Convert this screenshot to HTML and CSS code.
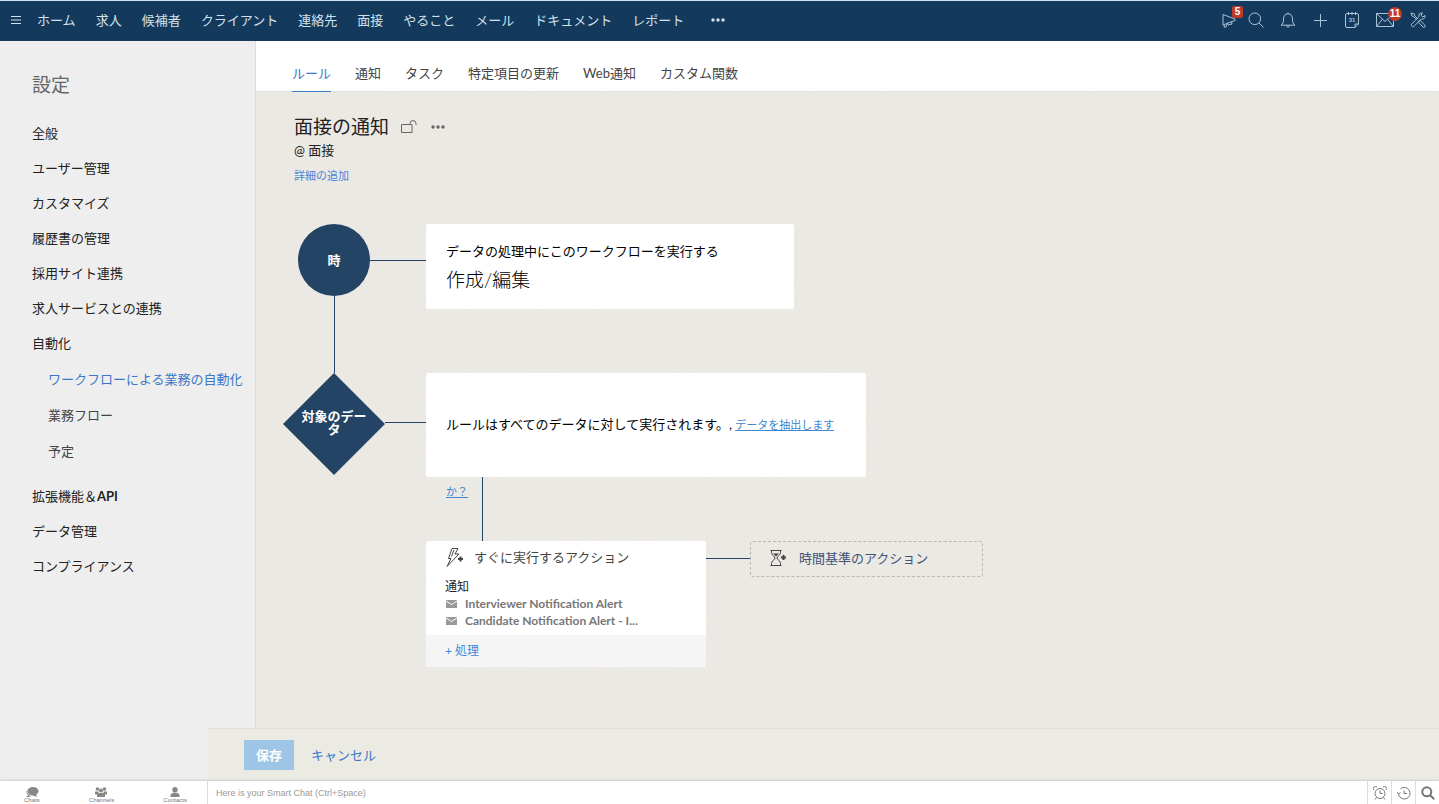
FILE: index.html
```
<!DOCTYPE html>
<html lang="ja">
<head>
  <meta charset="utf-8">
  <title>面接の通知</title>
  <meta name="viewport" content="width=device-width, initial-scale=1">
  <link rel="stylesheet" href="styles.css">
</head>
<body>
  <header class="topbar">
    <button class="icon-btn" aria-label="メニュー">
      <svg width="12" height="12" viewBox="0 0 12 12"><path d="M1 2.500h10M1 6h10M1 9.500h10"/></svg>
    </button>
    <nav class="topnav">
      <a href="#">ホーム</a>
      <a href="#">求人</a>
      <a href="#">候補者</a>
      <a href="#">クライアント</a>
      <a href="#">連絡先</a>
      <a href="#">面接</a>
      <a href="#">やること</a>
      <a href="#">メール</a>
      <a href="#">ドキュメント</a>
      <a href="#">レポート</a>
    </nav>
    <button class="icon-btn more" aria-label="その他">
      <svg class="dots" width="14" height="4" viewBox="0 0 14 4"><circle cx="2" cy="2" r="1.7"/><circle cx="7" cy="2" r="1.7"/><circle cx="12" cy="2" r="1.7"/></svg>
    </button>
    <div class="tools">
      <button class="icon-btn" aria-label="お知らせ">
        <svg width="16" height="16" viewBox="0 0 16 16"><path d="M2 2.500v10.500l3.500-1.500L14 8.500V7zM3.500 12.500l-.5 2.500h2l1-3M6.500 11l.5 2 4-1-.5-2"/></svg>
        <span class="badge square">5</span>
      </button>
      <button class="icon-btn" aria-label="検索">
        <svg width="16" height="16" viewBox="0 0 16 16"><circle cx="6.800" cy="6.800" r="5.800"/><path d="M11 11l4.500 4.500"/></svg>
      </button>
      <button class="icon-btn" aria-label="通知">
        <svg width="16" height="16" viewBox="0 0 16 16"><path d="M8 .5v1.200M1 13.200c2-1.200 2.500-3 2.500-6C3.500 4 5 1.800 8 1.800S12.500 4 12.500 7.200c0 3 .5 4.800 2.500 6zM6.500 13.200c0 2.500 3 2.500 3 0"/></svg>
      </button>
      <button class="icon-btn" aria-label="追加">
        <svg width="16" height="16" viewBox="0 0 16 16"><path d="M8.500 2v13M2 8.500h13"/></svg>
      </button>
      <button class="icon-btn" aria-label="カレンダー">
        <svg width="16" height="16" viewBox="0 0 16 16"><path d="M11 15.500H3a1.500 1.500 0 0 1-1.500-1.500V3A1.500 1.500 0 0 1 3 1.500h10A1.500 1.500 0 0 1 14.500 3v9zM11 15.500V12h3.500M4.500 0v3M8 0v3M11.500 0v3"/><text x="8" y="9.500">31</text></svg>
      </button>
      <button class="icon-btn" aria-label="メール">
        <svg width="18" height="14" viewBox="0 0 18 14"><path d="M.5.5h17v13H.5zM.5.5L9 8.500 17.500.5M.5 13.500l6-7.300M17.500 13.500l-6-7.300"/></svg>
        <span class="badge round">11</span>
      </button>
      <button class="icon-btn" aria-label="設定">
        <svg width="16" height="16" viewBox="0 0 16 16"><path d="M1 1l3.500 1 .3 1.800 3.400 3.400M1 1l1 3 1.800.8 3.400 3.400M9 9l1.200-.5 4.800 4.800c1 1.200-.7 2.900-1.900 1.900L8.500 10.400zM15 3.500L12.800 5 11 3.200 12.500 1C10 .5 8.300 2.500 9 4.700L1.700 12c-1.500 1.500.8 3.800 2.300 2.300L11.300 7c2.200.7 4.200-1 3.700-3.500z"/></svg>
      </button>
    </div>
  </header>

  <div class="layout">
    <aside class="sidebar">
      <h2>設定</h2>
      <ul class="menu">
        <li><a href="#">全般</a></li>
        <li><a href="#">ユーザー管理</a></li>
        <li><a href="#">カスタマイズ</a></li>
        <li><a href="#">履歴書の管理</a></li>
        <li><a href="#">採用サイト連携</a></li>
        <li><a href="#">求人サービスとの連携</a></li>
        <li><a href="#">自動化</a>
          <ul class="submenu">
            <li><a class="active" href="#">ワークフローによる業務の自動化</a></li>
            <li><a href="#">業務フロー</a></li>
            <li><a href="#">予定</a></li>
          </ul>
        </li>
        <li><a href="#">拡張機能＆<b>API</b></a></li>
        <li><a href="#">データ管理</a></li>
        <li><a href="#">コンプライアンス</a></li>
      </ul>
    </aside>

    <main class="content">
      <nav class="tabs">
        <a class="active" href="#">ルール</a>
        <a href="#">通知</a>
        <a href="#">タスク</a>
        <a href="#">特定項目の更新</a>
        <a href="#">Web通知</a>
        <a href="#">カスタム関数</a>
      </nav>

      <section class="rule">
        <div class="rule-title">
          <h1>面接の通知</h1>
          <button class="icon-btn" aria-label="ロック">
            <svg width="16" height="14" viewBox="0 0 16 14"><path d="M.5 4.500h10.500v8H.5zM9 4.500V3.500a3 3 0 0 1 6 0V5"/></svg>
          </button>
          <button class="icon-btn more" aria-label="その他">
            <svg class="dots" width="14" height="4" viewBox="0 0 14 4"><circle cx="2" cy="2" r="1.700"/><circle cx="7" cy="2" r="1.700"/><circle cx="12" cy="2" r="1.700"/></svg>
          </button>
        </div>
        <p class="module">@ 面接</p>
        <a class="add-detail" href="#">詳細の追加</a>
      </section>

      <section class="flow">
        <div class="row">
          <div class="node">
            <div class="circle">時</div>
            <div class="vline"></div>
          </div>
          <div class="hline long"></div>
          <div class="card when">
            <p>データの処理中にこのワークフローを実行する</p>
            <h3>作成/編集</h3>
          </div>
        </div>
        <div class="row">
          <div class="node">
            <div class="diamond"><span>対象のデータ</span></div>
          </div>
          <div class="hline"></div>
          <div class="condition">
            <div class="card criteria">ルールはすべてのデータに対して実行されます。, <a href="#">データを抽出しますか？</a></div>
            <div class="vline"></div>
          </div>
        </div>
        <div class="row actions">
          <div class="card instant">
            <h4>
              <svg width="18" height="20" viewBox="0 0 18 20"><path d="M6 1.500h6L9 7h4L1 19.500 5 11.500H2.500zM8 3L5.500 9.500"/><path class="thick" d="M14.500 9.500v5M12 12h5"/></svg>
              すぐに実行するアクション
            </h4>
            <h5>通知</h5>
            <ul class="alerts">
              <li><svg width="11" height="8" viewBox="0 0 11 8"><path d="M0 0h11v8H0z"/><path class="flap" d="M0 1l5.500 3.500L11 1"/></svg>Interviewer Notification Alert</li>
              <li><svg width="11" height="8" viewBox="0 0 11 8"><path d="M0 0h11v8H0z"/><path class="flap" d="M0 1l5.500 3.500L11 1"/></svg>Candidate Notification Alert - I...</li>
            </ul>
            <button class="add-action">+ 処理</button>
          </div>
          <div class="hline"></div>
          <button class="timed">
            <svg width="17" height="16" viewBox="0 0 17 16"><path d="M.5.5h11M.5 15.500h11M1.500.5v2C1.500 5 5 6.500 5 8s-3.500 3-3.500 5.500v2M10.500.5v2C10.500 5 7 6.500 7 8s3.500 3 3.500 5.500v2"/><path class="sand" d="M3 3.500h6L6 6.500z"/><path class="thick" d="M13.500 5v5M11 7.500h5"/></svg>
            時間基準のアクション
          </button>
        </div>
      </section>
    </main>
  </div>

  <div class="savebar">
    <button class="save">保存</button>
    <a href="#">キャンセル</a>
  </div>

  <footer class="chatbar">
    <nav class="chat-tabs">
      <a href="#"><svg width="14" height="10" viewBox="0 0 14 10"><ellipse cx="8" cy="4.200" rx="5.500" ry="4.200"/><path d="M10 7l2.500 3-5-1.500zM2 3.500C1 5 1.500 7 3 8.500l-2 1.300c2 .3 4 .2 5-.8-2.500-.5-4-2.500-4-5.500z"/></svg>Chats</a>
      <a href="#"><svg width="12" height="10" viewBox="0 0 12 10"><circle cx="2.500" cy="2" r="1.800"/><circle cx="9.500" cy="2" r="1.800"/><circle cx="6" cy="3.500" r="2"/><path d="M0 4.500h3.500v3H0zM8.500 4.500H12v3H8.500zM2 10V7.500L4 6h4l2 1.500V10z"/></svg>Channels</a>
      <a href="#"><svg width="10" height="10" viewBox="0 0 10 10"><circle cx="5" cy="2.700" r="2.700"/><path d="M.5 10V7.500L3 5.800h4l2.500 1.700V10z"/></svg>Contacts</a>
    </nav>
    <input class="smart-chat" type="text" aria-label="Smart Chat" placeholder="Here is your Smart Chat (Ctrl+Space)">
    <div class="chat-tools">
      <button class="icon-btn" aria-label="リマインダー"><svg width="14" height="14" viewBox="0 0 14 14"><circle cx="7" cy="7.500" r="5"/><path d="M7 4.500v3h2.500M1 4a2 2 0 0 1 3-3M13 4a2 2 0 0 0-3-3M3.500 11.500L2 13.500M10.500 11.500l1.500 2"/></svg></button>
      <button class="icon-btn" aria-label="履歴"><svg width="14" height="14" viewBox="0 0 14 14"><path d="M1.500 8A5.800 5.800 0 1 0 3.500 2.800"/><path d="M7 4.500v3h3M0 6l1.500 2 2-1.500"/></svg></button>
      <button class="icon-btn" aria-label="検索"><svg class="find" width="14" height="14" viewBox="0 0 14 14"><circle cx="5.800" cy="5.800" r="4.500"/><path d="M9 9l4.200 4.200"/></svg></button>
    </div>
  </footer>
</body>
</html>
```

FILE: styles.css
```
* { box-sizing: border-box; }
body { margin: 0; height: 100vh; display: flex; flex-direction: column; position: relative; overflow: hidden; background: #eee; color: #222; font: 13px/20px Lato, "Noto Sans CJK JP", sans-serif; }
h1, h2, h3, h4, h5, p, ul { margin: 0; padding: 0; font-weight: normal; }
ul { list-style: none; }
a { color: inherit; text-decoration: none; }
button { font: inherit; cursor: pointer; }
svg { fill: none; stroke: currentColor; stroke-width: 1; flex: none; display: block; }
.dots { fill: currentColor; stroke: none; }
.thick { stroke-width: 2; }
.icon-btn { position: relative; display: flex; padding: 0; border: 0; background: none; color: inherit; }

/* top bar */
.topbar { flex: none; height: 41px; display: flex; align-items: center; padding: 0 13px 2px 10px; border-top: 1px solid #cfe3ef; background: #133a5c; color: #d3e1ec; }
.topnav { display: flex; gap: 20px; margin-left: 15px; white-space: nowrap; }
.topbar .more { margin-left: 27px; }
.tools { display: flex; align-items: center; gap: 16px; margin-left: auto; color: #a9c3d8; }
.tools .icon-btn:first-child { margin-right: -5px; }
.tools text { font: bold 6px "Liberation Sans", sans-serif; fill: currentColor; stroke: none; text-anchor: middle; }
.badge { position: absolute; color: #fff; background: #c0392b; font: bold 10px/12px "Liberation Sans", sans-serif; text-align: center; }
.square { top: -6px; right: -6px; width: 11px; border-radius: 2px; }
.round { top: -6px; right: -8px; width: 14px; line-height: 14px; border-radius: 50%; }

.layout { flex: 1; display: flex; min-height: 0; }

/* settings menu */
.sidebar { flex: none; width: 256px; padding: 30px 0 0 32px; border-right: 1px solid #dcdcdc; background: #eee; white-space: nowrap; }
.sidebar h2 { margin-bottom: 17px; color: #666; font-size: 19px; line-height: 28px; }
.menu { line-height: 35px; }
.submenu { margin-bottom: 10px; padding-left: 16px; line-height: 36px; color: #444; }
.submenu .active { color: #3c78c8; }

/* rule editor */
.content { flex: 1; min-width: 0; background: #eae8e2 repeating-linear-gradient(45deg, #edebe6 0, #edebe6 1px, #e8e5df 2px, #edebe6 3px); }
.tabs { display: flex; gap: 24px; height: 51px; padding: 15px 36px 0; background: #fff; color: #444; line-height: 35px; border-bottom: 1px solid #e4e2dc; }
.tabs a { height: 36px; }
.tabs .active { color: #3c78c8; border-bottom: 1px solid #3c82c4; }
.rule { padding: 21px 38px 0; }
.rule-title { display: flex; align-items: center; color: #666; }
.rule-title h1 { margin-right: 12px; color: #222; font-size: 19px; line-height: 27px; }
.rule-title .more { margin-left: 14px; }
.add-detail { display: block; margin-top: 6px; color: #4a86dc; font-size: 11px; }

.flow { padding: 38px 27px 0; }
.row { display: flex; }
.node { flex: none; width: 102px; display: flex; flex-direction: column; align-items: center; }
.circle { width: 72px; height: 72px; border-radius: 50%; background: #244465; color: #fff; font-weight: bold; line-height: 72px; text-align: center; }
.vline { width: 1px; flex: 1; background: #244465; }
.hline { flex: none; width: 41px; height: 1px; margin-top: 49px; background: #244465; }
.hline.long { width: 56px; margin: 36px 0 0 -15px; }
.diamond { width: 102px; height: 102px; display: flex; align-items: center; justify-content: center; padding-bottom: 2px; background: #244465; clip-path: polygon(50% 0, 100% 50%, 50% 100%, 0 50%); color: #fff; font-weight: bold; line-height: 13px; text-align: center; }
.diamond span { width: 68px; }
.card { border-radius: 2px; background: #fff; }
.when { width: 368px; height: 85px; padding: 17px 20px; margin-bottom: 64px; color: #000; }
.when h3 { margin-top: 6px; font-size: 19px; line-height: 25px; font-weight: 300; }
.criteria { width: 440px; height: 104px; padding: 18px 20px; color: #000; line-height: 66px; }
.criteria a { color: #4086cc; font-size: 11px; text-decoration: underline; }
.condition .vline { height: 64px; margin-left: 56px; }
.actions { padding-left: 143px; align-items: flex-start; }
.actions .hline { width: 44px; margin-top: 17px; }
.instant { width: 280px; padding-top: 6px; }
.instant h4 { display: flex; align-items: center; gap: 10px; padding-left: 20px; color: #444; }
.instant h5 { margin-top: 12px; padding-left: 19px; font-size: 12px; line-height: 16px; }
.alerts { padding: 0 20px 6px; color: #777; font-size: 12px; line-height: 17px; font-weight: bold; }
.alerts li { display: flex; align-items: center; gap: 8px; }
.alerts svg { fill: #999; stroke: none; }
.alerts .flap { fill: none; stroke: #fff; }
.add-action { display: block; width: 100%; height: 32px; padding: 0 19px; border: 0; border-radius: 0 0 2px 2px; background: #f5f5f5; color: #4086dc; font-size: 12px; text-align: left; }
.timed { display: flex; align-items: center; gap: 12px; width: 233px; height: 36px; padding: 0 19px 2px; border: 1px dashed #b9b8b4; border-radius: 3px; background: none; color: #3d5377; }
.timed svg { color: #444; }
.sand { fill: currentColor; stroke: none; }

/* save bar slides over the menu's lower right corner */
.savebar { position: absolute; left: 208px; right: 0; bottom: 23px; height: 53px; display: flex; align-items: center; gap: 17px; padding-left: 36px; border-top: 1px solid #dfddd7; background: #ebeae3; color: #3c78c8; }
.save { width: 50px; height: 30px; padding: 0; border: 0; background: #9fc5e6; color: #fff; font-weight: bold; }

/* chat bar */
.chatbar { flex: none; display: flex; height: 23px; position: relative; background: #fff; box-shadow: 0 -1px 2px #ccc; color: #777; }
.chat-tabs { flex: none; width: 208px; display: flex; justify-content: space-between; padding: 6px 20px 0 24px; border-right: 1px solid #ddd; font: 6px/7px "Liberation Sans", sans-serif; }
.chat-tabs a { display: flex; flex-direction: column; align-items: center; }
.chat-tabs svg { fill: #888; stroke: none; }
.smart-chat { flex: 1; min-width: 0; padding: 0 8px; border: 0; outline: 0; background: none; font: 9px "Liberation Sans", sans-serif; }
.smart-chat::placeholder { color: #999; }
.chat-tools { display: flex; }
.chat-tools .icon-btn { width: 24px; align-items: center; justify-content: center; border-left: 1px solid #ddd; }
.find { stroke-width: 2; }
```
